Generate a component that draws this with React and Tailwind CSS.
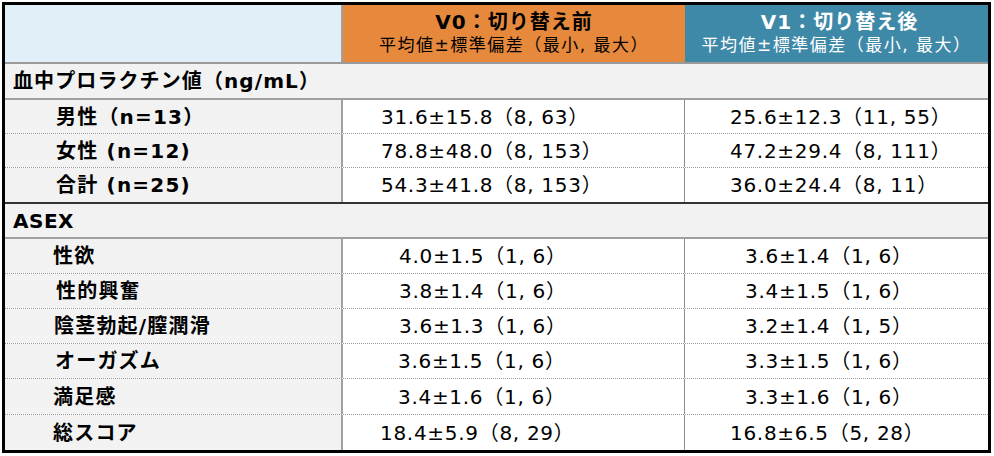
import React from "react";

const FONT = { fontFamily: '"DejaVu Sans", "Noto Sans CJK JP", sans-serif' };

const upper = [
  { label: "男性（n=13）", pl: "pl-[51px]", a: "31.6±15.8（8, 63）", pa: "pl-[38px]", b: "25.6±12.3（11, 55）", pb: "pl-[45px]", h: "h-[34px]" },
  { label: "女性 (n=12)", pl: "pl-[51px]", a: "78.8±48.0（8, 153）", pa: "pl-[38px]", b: "47.2±29.4（8, 111）", pb: "pl-[45px]", h: "h-[34px]" },
  { label: "合計 (n=25)", pl: "pl-[51px]", a: "54.3±41.8（8, 153）", pa: "pl-[38px]", b: "36.0±24.4（8, 11）", pb: "pl-[45px]", h: "h-[34px]", last: true },
];

const lower = [
  { label: "性欲", pl: "pl-[48px]", a: "4.0±1.5（1, 6）", pa: "pl-[56px]", b: "3.6±1.4（1, 6）", pb: "pl-[60px]", h: "h-[35px]" },
  { label: "性的興奮", pl: "pl-[51px]", a: "3.8±1.4（1, 6）", pa: "pl-[56px]", b: "3.4±1.5（1, 6）", pb: "pl-[60px]", h: "h-[35px]" },
  { label: "陰茎勃起/膣潤滑", pl: "pl-[49px]", a: "3.6±1.3（1, 6）", pa: "pl-[56px]", b: "3.2±1.4（1, 5）", pb: "pl-[60px]", h: "h-[35px]" },
  { label: "オーガズム", pl: "pl-[50px]", a: "3.6±1.5（1, 6）", pa: "pl-[55px]", b: "3.3±1.5（1, 6）", pb: "pl-[60px]", h: "h-[35px]" },
  { label: "満足感", pl: "pl-[48px]", a: "3.4±1.6（1, 6）", pa: "pl-[55px]", b: "3.3±1.6（1, 6）", pb: "pl-[60px]", h: "h-[36px]" },
  { label: "総スコア", pl: "pl-[48px]", a: "18.4±5.9（8, 29）", pa: "pl-[37px]", b: "16.8±6.5（5, 28）", pb: "pl-[45px]", h: "h-[35px]", last: true },
];

function Row({ r }) {
  return (
    <div
      className={`grid grid-cols-[338px_342px_303px] ${r.h} ${
        r.last ? "" : "border-b border-dotted border-[#9a9a9a]"
      }`}
    >
      <div className={`flex items-center bg-[#f2f2f2] border-r-2 border-[#a0a0a0] ${r.pl} font-bold text-[20px] tracking-[1.2px] text-black whitespace-nowrap`}>
        {r.label}
      </div>
      <div className={`flex items-center bg-white border-r border-[#8c8c8c] text-[20px] tracking-[0.7px] text-black whitespace-nowrap ${r.pa}`}>
        {r.a}
      </div>
      <div className={`flex items-center bg-white text-[20px] tracking-[0.7px] text-black whitespace-nowrap ${r.pb}`}>
        {r.b}
      </div>
    </div>
  );
}

export default function App() {
  return (
    <div className="w-[994px] h-[456px] bg-white pt-[2px] pl-[2px]" style={FONT}>
      <div className="w-[989px] h-[451px] border-[3px] border-black flex flex-col overflow-hidden">
        {/* header */}
        <div className="grid grid-cols-[338px_342px_303px] h-[59px] border-b-2 border-[#9a9a9a]">
          <div className="bg-[#e1eff9] border-r-2 border-[#a0a0a0]" />
          <div className="bg-[#e6893d] flex flex-col items-center justify-center text-black pb-[2px]">
            <div className="font-bold text-[20px] tracking-[1px] leading-[24px] whitespace-nowrap">V0：切り替え前</div>
            <div className="text-[17px] tracking-[1.5px] leading-[22px] whitespace-nowrap">平均値±標準偏差（最小, 最大）</div>
          </div>
          <div className="bg-[#3f89a8] flex flex-col items-center justify-center text-white pb-[2px]">
            <div className="font-bold text-[20px] tracking-[1px] leading-[24px] whitespace-nowrap pl-[6px]">V1：切り替え後</div>
            <div className="text-[17px] tracking-[1.5px] leading-[22px] whitespace-nowrap">平均値±標準偏差（最小, 最大）</div>
          </div>
        </div>
        {/* section 1 */}
        <div className="h-[36px] bg-[#f2f2f2] border-b-2 border-[#a0a0a0] flex items-center pl-[8px] font-bold text-[20px] tracking-[1.1px] text-black whitespace-nowrap">
          血中プロラクチン値（ng/mL）
        </div>
        {upper.map((r, i) => (
          <Row key={i} r={r} />
        ))}
        {/* section 2 */}
        <div className="h-[37px] bg-[#f2f2f2] border-t-2 border-[#333333] border-b-2 border-b-[#a0a0a0] flex items-center pl-[8px] font-bold text-[20px] tracking-[0.5px] text-black">
          ASEX
        </div>
        {lower.map((r, i) => (
          <Row key={i} r={r} />
        ))}
      </div>
    </div>
  );
}
